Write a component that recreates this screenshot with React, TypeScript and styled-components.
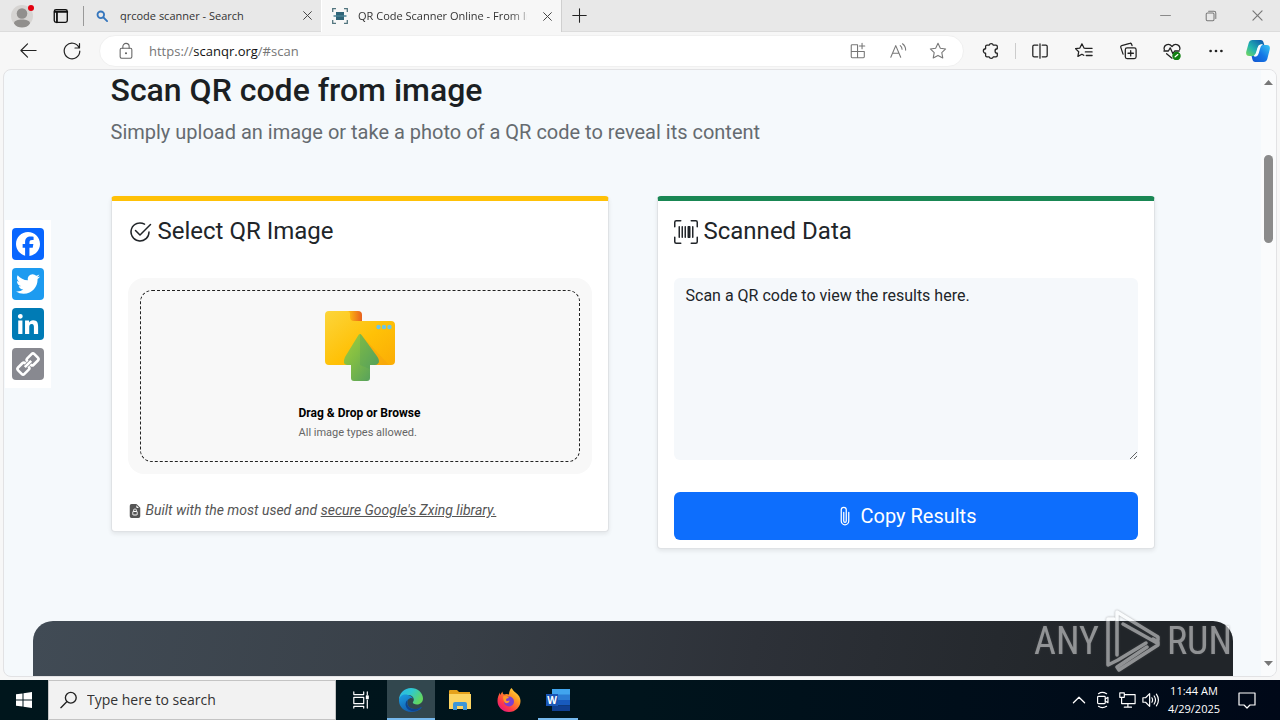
import React from 'react';
import styled, { createGlobalStyle, css } from 'styled-components';
import { BsCheck2Circle, BsUpcScan, BsPaperclip, BsFileEarmarkLockFill } from 'react-icons/bs';

const ui = "'Open Sans', 'Noto Sans', sans-serif";

const GlobalStyle = createGlobalStyle`
  *, *::before, *::after { box-sizing: border-box; }
  body { margin: 0; font-family: Roboto, sans-serif; color: #212529; }
  button { font: inherit; color: inherit; border: 0; background: none; padding: 0; margin: 0; }
  h1, h2, p { margin: 0; font-weight: 400; }
  svg { display: block; flex: none; }
`;

const Screen = styled.div`
  display: flex;
  flex-direction: column;
  height: 100vh;
  position: relative;
  overflow: hidden;
  background: #f7f7f7;
`;

/* ---------- browser chrome ---------- */

const TabStrip = styled.header`
  display: flex;
  align-items: stretch;
  height: 32px;
  flex: none;
  background: #e8e8e8;
  border-bottom: 1px solid #dcdcdc;
  font: 11px/16px ${ui};
  color: #333;
`;

const IconButton = styled.button<{ $w: number }>`
  width: ${(p) => p.$w}px;
  flex: none;
  display: flex;
  align-items: center;
  justify-content: center;
`;

const StripDivider = styled.span`
  width: 1px;
  height: 20px;
  margin: 6px 0 0 4px;
  background: #999;
`;

const Tab = styled.div<{ $active?: boolean }>`
  display: flex;
  align-items: center;
  width: ${(p) => (p.$active ? 241 : 237)}px;
  padding: 0 4px 0 ${(p) => (p.$active ? 10 : 12)}px;
  gap: ${(p) => (p.$active ? 10 : 12)}px;
  ${(p) =>
    p.$active &&
    css`
      background: #f7f7f7;
      height: 32px;
      border-right: 1px solid #cfcfcf;
      border-left: 1px solid #fff;
    `}
`;

const TabTitle = styled.span<{ $fade?: boolean }>`
  flex: 1;
  min-width: 0;
  overflow: hidden;
  white-space: nowrap;
  ${(p) => p.$fade && 'mask-image: linear-gradient(90deg, #000 150px, transparent 178px);'}
`;

const WindowControls = styled.div`
  display: flex;
  margin-left: auto;
`;

const Toolbar = styled.nav`
  display: flex;
  align-items: center;
  height: 37px;
  flex: none;
  padding: 0 2px 0 6px;
  background: #f7f7f7;
`;

const AddressBar = styled.div`
  flex: 1;
  min-width: 0;
  display: flex;
  align-items: center;
  height: 32px;
  margin: 0 5px;
  padding: 0 5px 0 8px;
  border-radius: 16px;
  background: #fff;
  border: 1px solid #f0f0f0;
`;

const Url = styled.a`
  flex: 1;
  margin-left: 6px;
  font: 13px/18px ${ui};
  color: #767676;
  text-decoration: none;
  b { font-weight: 400; color: #111; }
`;

const ToolDivider = styled.span`
  width: 1px;
  height: 16px;
  margin: 0 2px;
  background: #ccc;
`;

const Frame = styled.div`
  flex: 1;
  min-height: 0;
  display: flex;
  margin: 0 3px 3px;
  border: 1px solid #e2e2e4;
  border-radius: 8px;
  overflow: hidden;
  position: relative;
  background: #f5f9fc;
`;

const Scrollbar = styled.div`
  width: 15px;
  flex: none;
  display: flex;
  flex-direction: column;
  align-items: center;
  justify-content: space-between;
  padding: 9px 0;
  background: #fafbfc;
`;

const Thumb = styled.span`
  width: 9px;
  height: 88px;
  margin-bottom: 348px;
  border-radius: 5px;
  background: #8b8b8b;
`;

/* ---------- web page ---------- */

const Page = styled.main`
  flex: 1;
  min-width: 0;
  display: flex;
  flex-direction: column;
  padding: 1px 28px 0;
`;

const Container = styled.section`
  width: 100%;
  max-width: 1044px;
  margin: 0 auto 72px;
`;

const Heading = styled.h1`
  font-size: 32px;
  line-height: 38px;
  font-weight: 500;
  color: #1b1f23;
`;

const Lead = styled.p`
  margin: 8px 0 49px;
  font-size: 20px;
  line-height: 30px;
  color: #656b70;
`;

const Columns = styled.div`
  display: grid;
  grid-template-columns: 1fr 1fr;
  gap: 48px;
  align-items: start;
`;

const Card = styled.article<{ $accent: string }>`
  padding: 16px 16px 8px;
  border: 1px solid #dfe2e5;
  border-top: 5px solid ${(p) => p.$accent};
  border-radius: 4px;
  background: #fff;
  box-shadow: 0 2px 4px rgba(0, 0, 0, 0.08);
`;

const CardTitle = styled.h2`
  display: flex;
  align-items: center;
  gap: 6px;
  margin-bottom: 32px;
  font-size: 24px;
  line-height: 29px;
`;

const DropPane = styled.div`
  padding: 12px;
  border-radius: 16px;
  background: #f8f8f8;
`;

const DropZone = styled.label`
  display: flex;
  flex-direction: column;
  align-items: center;
  height: 172px;
  padding-top: 20px;
  border: 1px dashed #222;
  border-radius: 12px;
  color: #000;
  input { position: absolute; width: 1px; height: 1px; opacity: 0; }
`;

const DropText = styled.span`
  display: block;
  margin-top: 22px;
  font-size: 12px;
  line-height: 20px;
  strong { display: block; font-weight: 700; }
  small { display: block; font-size: 11px; color: #666; }
`;

const Note = styled.p`
  display: flex;
  align-items: center;
  gap: 4px;
  margin: 26px 0 2px;
  font-size: 14px;
  line-height: 21px;
  font-style: italic;
  color: #555;
  a { color: inherit; }
`;

const Result = styled.textarea`
  display: block;
  width: 100%;
  height: 182px;
  margin-bottom: 32px;
  padding: 6px 12px;
  border: 0;
  border-radius: 6px;
  resize: vertical;
  background: #f5f8fb;
  color: #212529;
  font: 16px/24px Roboto, sans-serif;
`;

const CopyButton = styled.button`
  display: flex;
  align-items: center;
  justify-content: center;
  gap: 6px;
  width: 100%;
  height: 48px;
  border-radius: 6px;
  background: #0d6efd;
  color: #fff;
  font-size: 20px;
  line-height: 30px;
`;

const DarkPanel = styled.section`
  flex: 1 0 56px;
  width: 100%;
  max-width: 1200px;
  margin: 0 auto;
  border-radius: 20px 20px 0 0;
  background: linear-gradient(100deg, #414b55 0%, #383f47 35%, #2d3138 60%, #212529 90%);
`;

const ShareBar = styled.aside`
  position: absolute;
  left: 1px;
  top: 150px;
  display: flex;
  flex-direction: column;
  gap: 8px;
  padding: 8px 7px;
  background: #fff;
`;

const ShareLink = styled.a<{ $bg: string }>`
  width: 32px;
  height: 32px;
  border-radius: 4px;
  background: ${(p) => p.$bg};
`;

const Watermark = styled.div`
  position: absolute;
  right: 48px;
  bottom: 48px;
  display: flex;
  align-items: center;
  gap: 7px;
  color: #fff;
  opacity: 0.5;
  font: 38px/62px 'Roboto Condensed', 'Liberation Sans Narrow', 'Liberation Sans', sans-serif;
  filter: drop-shadow(0 0 1px #555);
  pointer-events: none;
`;

/* ---------- taskbar ---------- */

const Taskbar = styled.footer`
  display: flex;
  align-items: stretch;
  height: 40px;
  flex: none;
  background: linear-gradient(90deg, #00161c, #00141c 50%, #000818);
  color: #fff;
  font-family: ${ui};
`;

const SearchBox = styled.label`
  display: flex;
  align-items: center;
  gap: 9px;
  width: 288px;
  padding-left: 11px;
  border: 1px solid #c4c4c4;
  background: #f2f2f2;
  color: #222;
  input {
    flex: 1;
    min-width: 0;
    border: 0;
    padding: 0;
    background: transparent;
    font: 14px/20px ${ui};
  }
  input::placeholder { color: #333; opacity: 1; }
`;

const AppButton = styled(IconButton)<{ $active?: boolean; $open?: boolean }>`
  position: relative;
  margin-right: 1px;
  background: ${(p) => (p.$active ? '#32474e' : 'none')};
  ${(p) =>
    (p.$active || p.$open) &&
    css`
      &::after {
        content: '';
        position: absolute;
        bottom: 0;
        left: ${p.$active ? 0 : 4}px;
        right: ${p.$active ? 0 : 4}px;
        height: 2px;
        background: #76b9ed;
      }
    `}
`;

const AppList = styled.div`
  display: flex;
`;

const Tray = styled.div`
  display: flex;
  margin-left: auto;
  padding-right: 11px;
`;

const Clock = styled.time`
  width: 62px;
  padding-top: 2px;
  text-align: center;
  font-size: 11px;
  line-height: 18px;
  white-space: nowrap;
`;

/* ---------- icons ---------- */

type LineProps = { size?: number; color?: string; w?: number; children: React.ReactNode };
const Line = ({ size = 20, color = '#222', w = 1.2, children }: LineProps) => (
  <svg width={size} height={size} viewBox="0 0 20 20" fill="none" stroke={color} strokeWidth={w} strokeLinecap="round" strokeLinejoin="round" aria-hidden="true">
    {children}
  </svg>
);

const CloseIcon = ({ color = '#444', size = 11 }) => (
  <Line size={size} color={color} w={1.8}><path d="M3 3l14 14M17 3L3 17" /></Line>
);

const Avatar = () => (
  <svg width="26" height="26" viewBox="0 0 26 26" aria-hidden="true">
    <circle cx="14" cy="13" r="11" fill="#d6d4d2" />
    <circle cx="14" cy="10.500" r="5.300" fill="#918f8d" />
    <path d="M6 20.500c0-3 4-4 8-4s8 1 8 4c-2 3-5 4-8 4s-6-1-8-4z" fill="#918f8d" />
    <circle cx="23" cy="5" r="3" fill="#e3000f" />
  </svg>
);

const ScanFavicon = () => (
  <svg width="16" height="16" viewBox="0 0 16 16" fill="none" aria-hidden="true">
    <path d="M.7 4V.7H4M12 .7h3.300V4M15.300 12v3.300H12M4 15.300H.7V12" stroke="#53767f" strokeWidth="1.300" />
    <path d="M4 4h8v8H4z" fill="#2e6478" />
    <path d="M1.500 8h13" stroke="#4a8294" strokeWidth="1.500" />
  </svg>
);

const Copilot = () => (
  <svg width="24" height="24" viewBox="0 0 24 24" aria-hidden="true">
    <defs>
      <linearGradient id="cpA" x1="0" y1="1" x2="1" y2="0">
        <stop offset="0" stopColor="#7ad957" /><stop offset=".4" stopColor="#22b5b0" /><stop offset="1" stopColor="#0a4fae" />
      </linearGradient>
      <linearGradient id="cpB" x1="1" y1="0" x2="0" y2="1">
        <stop offset="0" stopColor="#38c8f2" /><stop offset=".5" stopColor="#1477e6" /><stop offset="1" stopColor="#1254cf" />
      </linearGradient>
    </defs>
    <path d="M6.500 1h8.200c1.800 0 2.500 1.300 3 3l.6 2h-3.200c-2 0-2.600 1-3.200 3l-1.500 5c-.6 2-1.500 3-3.300 3H3.200C.6 17-.3 15 .3 12.500L2.700 4C3.300 2 4.500 1 6.500 1z" fill="url(#cpA)" />
    <path d="M17.500 23H9.300c-1.800 0-2.500-1.300-3-3l-.7-3h2c2 0 3-1 3.600-3l1.500-5c.6-2 1.500-3 3.500-3h4.600c2.600 0 3.500 2 2.900 4.500L21.300 20c-.6 2-1.800 3-3.800 3z" fill="url(#cpB)" />
    <path d="M12.200 9c.5-1.800 1.300-2.800 2.800-3-1 1-1.300 2.200-1.700 3.500L12 14c-.6 2-1.700 3.100-3.600 3 1.400-.6 1.900-1.600 2.300-3z" fill="#f7fbff" stroke="#f7fbff" strokeWidth="1.500" />
  </svg>
);

const UploadFolder = () => (
  <svg width="70" height="70" viewBox="0 0 70 70" aria-hidden="true">
    <defs>
      <linearGradient id="fold" x1="0" y1="0" x2="1" y2="1">
        <stop offset="0" stopColor="#fcd53b" /><stop offset=".55" stopColor="#ffc107" /><stop offset="1" stopColor="#fbac05" />
      </linearGradient>
      <linearGradient id="tabg" x1="0" y1="0" x2="1" y2="0">
        <stop offset=".3" stopColor="#fbb112" /><stop offset="1" stopColor="#e8601e" />
      </linearGradient>
      <linearGradient id="arr" x1="0" y1="0" x2="1" y2="1">
        <stop offset="0" stopColor="#a2cf3d" /><stop offset=".4" stopColor="#82bd44" /><stop offset="1" stopColor="#4b9a63" />
      </linearGradient>
    </defs>
    <path d="M20 0h13q4 0 4 4v8H20z" fill="url(#tabg)" />
    <path d="M4 0h18q3 0 3 3v3q0 4 4 4h37q4 0 4 4v36q0 4-4 4H4q-4 0-4-4V4q0-4 4-4z" fill="url(#fold)" />
    <path d="M37 25l27 29H45V40z" fill="#f3a010" opacity=".45" />
    <path d="M33.500 24q1.500-2 3 0l16 22q3 5 0 7-1 1-3 1h-4.500v13q0 3-3 3H29q-3 0-3-3V54h-4q-5-1-2-8z" fill="url(#arr)" />
    <path d="M35 23q1 0 1.500 1l16 22q3 5 0 7-1 1-3 1h-4.500v4L35 54z" fill="#4c9a60" opacity=".28" />
    <g fill="#6cc6e6"><circle cx="53.500" cy="16" r="2.200" /><circle cx="59" cy="16" r="2.200" /><circle cx="64.500" cy="16" r="2.200" /></g>
  </svg>
);

const EdgeLogo = () => (
  <svg width="24" height="24" viewBox="0 0 24 24" aria-hidden="true">
    <defs>
      <linearGradient id="edA" x1="0" y1="0" x2="1" y2=".5"><stop offset="0" stopColor="#2bb5ea" /><stop offset=".5" stopColor="#2fc8cf" /><stop offset="1" stopColor="#62d660" /></linearGradient>
      <linearGradient id="edB" x1="0" y1="0" x2=".6" y2="1"><stop offset="0" stopColor="#1b9ee2" /><stop offset="1" stopColor="#1257a8" /></linearGradient>
    </defs>
    <path d="M0 12C0 5 5.500 0 12 0s12 4.800 12 10.500c0 3.500-2.700 6-6 6-2.500 0-4.200-.9-4.200-1.900 0-.7 1-1.200 1-3C14.800 9 12.300 7 9 7 4.500 7 1 9 0 12z" fill="url(#edA)" />
    <path d="M0 12c.6-4.200 4.500-6.300 9-5 2.500.6 4.500 2 5 3.500-1.200-1-3.500-.7-4.800 1-2.600 4 .6 9.500 6.300 9.500 2.700 0 5-1 6.300-1.800.6-.3.9.2.6.7C20.200 22.500 16.500 24 12 24 5 24-.3 18.500 0 12z" fill="url(#edB)" />
    <path d="M9 11.500c-2.600 4 .6 9.500 6.300 9.500 2.700 0 5-1 6.500-1.800C17 25.500 7.500 23.500 6.600 17c-.2-2.300.7-4.300 2.400-5.500z" fill="#0d4390" />
  </svg>
);

const ExplorerLogo = () => (
  <svg width="22" height="20" viewBox="0 0 22 20" aria-hidden="true">
    <path d="M0 1q0-1 1-1h7l2 2h11v4H0z" fill="#e5a11b" />
    <path d="M0 4h22v15H0z" fill="#fcd462" />
    <path d="M4 20v-6q0-2 2-2h10q2 0 2 2v6h-4v-4H8v4z" fill="#3c96d6" />
  </svg>
);

const FirefoxLogo = () => (
  <svg width="24" height="24" viewBox="0 0 24 24" aria-hidden="true">
    <defs>
      <linearGradient id="ff" x1="1" y1="0" x2=".2" y2="1"><stop offset="0" stopColor="#fff04a" /><stop offset=".4" stopColor="#ff9722" /><stop offset=".75" stopColor="#ff3a47" /><stop offset="1" stopColor="#e21485" /></linearGradient>
    </defs>
    <path d="M14.500 0c1.500 2 2 3 4 4.500C22 7 23.500 10 23.500 13c0 6-5 11-11.500 11S.5 19 .5 13c0-3.500 1-6 2.500-8.500V7l2.500-3.500c0 1.500.5 2.500 1.500 3C9 5.500 11 6 12 6.500c0-2.500.8-5 2.500-6.500z" fill="url(#ff)" />
    <circle cx="12" cy="13.500" r="5" fill="#7a3fd0" />
    <path d="M6 8.500c2-1 4.500-.5 6 1.500-2 0-3 .8-3 2 0 1.500 2.500 1 3.500.500 0 2-2 3-4 2.500C7 14 6 11.500 6 8.500z" fill="#ff9a26" />
  </svg>
);

const WordLogo = () => (
  <svg width="24" height="22" viewBox="0 0 24 22" aria-hidden="true">
    <path d="M6 0h18v6H6z" fill="#41a5ee" /><path d="M6 5.500h18V11H6z" fill="#2b7cd3" />
    <path d="M6 11h18v5.500H6z" fill="#185abd" /><path d="M6 16.500h18V22H6z" fill="#103f91" />
    <path d="M0 5h12v12H0z" fill="#1a56b5" />
    <text x="6" y="14.500" fill="#fff" fontSize="10" fontWeight="700" textAnchor="middle" fontFamily="Open Sans, sans-serif">W</text>
  </svg>
);

const PlayMark = () => (
  <svg width="54" height="62" viewBox="0 0 54 62" fill="none" stroke="#fff" strokeWidth="3.500" strokeLinejoin="round" strokeLinecap="round" aria-hidden="true">
    <path d="M11 45V2l41 25v3" />
    <path d="M8 9H2v46l10-5 28-17M17 14l34 19" />
    <path d="M11 57l2 3 39-25v-3l-5-3M11 57l30-20" />
  </svg>
);

export default function App() {
  return (
    <>
      <GlobalStyle />
      <Screen>
        <TabStrip>
          <IconButton $w={42} aria-label="Profile"><Avatar /></IconButton>
          <IconButton $w={37} aria-label="Tab actions">
            <Line size={18} color="#111" w={1.5}><rect x="2.500" y="3" width="14.500" height="14" rx="2" /><path d="M3 5.500h14M5.500 6v11" strokeWidth="2" /></Line>
          </IconButton>
          <StripDivider />
          <Tab>
            <Line size={12} color="#3576bd" w={3}><circle cx="8" cy="8" r="5.500" /><path d="M12.500 12.500l6 6" /></Line>
            <TabTitle>qrcode scanner - Search</TabTitle>
            <IconButton $w={20} aria-label="Close tab"><CloseIcon /></IconButton>
          </Tab>
          <Tab $active>
            <ScanFavicon />
            <TabTitle $fade>QR Code Scanner Online - From Image</TabTitle>
            <IconButton $w={20} aria-label="Close tab"><CloseIcon /></IconButton>
          </Tab>
          <IconButton $w={34} aria-label="New tab"><Line size={15} w={1.4}><path d="M10 1v18M1 10h18" /></Line></IconButton>
          <WindowControls>
            <IconButton $w={46} aria-label="Minimize"><Line size={11} color="#888" w={1.8}><path d="M1 10h18" /></Line></IconButton>
            <IconButton $w={46} aria-label="Restore"><Line size={12} color="#777" w={1.7}><rect x="2" y="5" width="13" height="13" rx="2" /><path d="M6 2h9q3 0 3 3v9" /></Line></IconButton>
            <IconButton $w={46} aria-label="Close"><CloseIcon color="#777" size={13} /></IconButton>
          </WindowControls>
        </TabStrip>

        <Toolbar>
          <IconButton $w={44} aria-label="Back"><Line size={19}><path d="M18 10H2M9 3l-7 7 7 7" /></Line></IconButton>
          <IconButton $w={44} aria-label="Refresh"><Line size={20}><path d="M17 6.500A7.800 7.800 0 1 0 17.800 10M17.500 2.500v4.500H13" /></Line></IconButton>
          <AddressBar>
            <IconButton $w={35} aria-label="Site information">
              <Line size={18} color="#666"><rect x="3.500" y="7" width="13" height="11" rx="1.500" /><path d="M6.500 7V5a3.500 3.500 0 0 1 7 0v2" /><circle cx="10" cy="12.500" r=".6" fill="#666" /></Line>
            </IconButton>
            <Url href="#scan">https://<b>scanqr.org</b>/#scan</Url>
            <IconButton $w={40} aria-label="App available">
              <Line size={18} color="#777"><path d="M9.500 3H3.500q-1 0-1 1v12.500q0 1 1 1H16q1 0 1-1v-6H2.500M9.500 3v14.500M14.500 1.500v6M11.500 4.500h6" /></Line>
            </IconButton>
            <IconButton $w={40} aria-label="Read aloud">
              <Line size={18} color="#777"><path d="M2 17L7.500 4 13 17M4 12.500h7M12.500 4q2 1.500 2 4M15 2q3.500 2.500 3.500 7" /></Line>
            </IconButton>
            <IconButton $w={40} aria-label="Add to favorites">
              <Line size={18} color="#777"><path d="M10 1.500l2.600 5.400 5.900.8-4.300 4.100 1.100 5.900L10 14.900l-5.300 2.800 1.100-5.900L1.500 7.700l5.900-.8z" /></Line>
            </IconButton>
          </AddressBar>
          <IconButton $w={44} aria-label="Extensions">
            <Line size={18} w={1.4}><path d="M5.500 3.500H8a2.300 2.300 0 0 1 4.500 0h3q1.500 0 1.500 1.500v2.500a1.500 1.500 0 0 0 0 5V15q0 1.500-1.500 1.500h-3a2.300 2.300 0 0 1-4.500 0H5.500Q4 16.500 4 15v-2.500a2.400 2.400 0 0 1 0-5V5q0-1.500 1.500-1.500z" /></Line>
          </IconButton>
          <ToolDivider />
          <IconButton $w={44} aria-label="Split screen">
            <Line size={18} w={1.4}><path d="M7.500 3.500h-4Q2 3.500 2 5v10q0 1.500 1.500 1.500h4M10 2v16M12.500 3.500h4q1.500 0 1.500 1.500v10q0 1.500-1.500 1.500h-4" /></Line>
          </IconButton>
          <IconButton $w={44} aria-label="Favorites">
            <Line size={18} w={1.400}><path d="M12 7l-2-.3L7.700 2 5.400 6.700l-4.900.7 3.600 3.500-.9 5.100 4.500-2.400 2 1.200M12.500 7h6.500M11.500 11h7.500M12.500 15h6.500" /></Line>
          </IconButton>
          <IconButton $w={44} aria-label="Collections">
            <Line size={18} w={1.400}><rect x="7" y="6.500" width="12" height="12" rx="2" /><path d="M13 9.500v6M10 12.500h6M4.500 13.500L2 6q-.500-1.500 1-2l9-2.500q1.500-.5 2 1l.5 1.500" /></Line>
          </IconButton>
          <IconButton $w={44} aria-label="Browser essentials">
            <Line size={18} w={1.400}><path d="M1.500 8.500C0 4 6 0 10 5c4-5 10-1 8.500 3.500M1 10h5l2-3.500 3 6.500 2-3h5M4 13l6 5" /><circle cx="15" cy="15.500" r="4" fill="#128012" stroke="#128012" /><path d="M13.500 16.500l3-2.500" stroke="#fff" /></Line>
          </IconButton>
          <IconButton $w={44} aria-label="Settings and more">
            <Line size={18} w={0}><g fill="#222"><circle cx="4" cy="10" r="1.500" /><circle cx="10" cy="10" r="1.500" /><circle cx="16" cy="10" r="1.500" /></g></Line>
          </IconButton>
          <IconButton $w={40} aria-label="Copilot"><Copilot /></IconButton>
        </Toolbar>

        <Frame>
          <Page>
            <Container>
              <Heading>Scan QR code from image</Heading>
              <Lead>Simply upload an image or take a photo of a QR code to reveal its content</Lead>
              <Columns>
                <Card $accent="#ffc107">
                  <CardTitle><BsCheck2Circle size={24} />Select QR Image</CardTitle>
                  <DropPane>
                    <DropZone>
                      <input type="file" accept="image/*" />
                      <UploadFolder />
                      <DropText><strong>Drag &amp; Drop or Browse</strong><small>All image types allowed.</small></DropText>
                    </DropZone>
                  </DropPane>
                  <Note><BsFileEarmarkLockFill size={14} /><span>Built with the most used and <a href="#zxing">secure Google's Zxing library.</a></span></Note>
                </Card>
                <Card $accent="#198754">
                  <CardTitle><BsUpcScan size={24} />Scanned Data</CardTitle>
                  <Result aria-label="Scanned data" readOnly defaultValue="Scan a QR code to view the results here." />
                  <CopyButton><BsPaperclip size={20} />Copy Results</CopyButton>
                </Card>
              </Columns>
            </Container>
            <DarkPanel />
          </Page>
          <Scrollbar>
            <svg width="9" height="6" viewBox="0 0 9 6" aria-hidden="true"><path d="M0 6l4.500-5L9 6z" fill="#777" /></svg>
            <Thumb />
            <svg width="9" height="6" viewBox="0 0 9 6" aria-hidden="true"><path d="M0 0l4.500 5L9 0z" fill="#777" /></svg>
          </Scrollbar>
          <ShareBar>
            <ShareLink $bg="#0866ff" href="#facebook" aria-label="Facebook">
              <svg width="32" height="32" viewBox="0 0 32 32" fill="#fff"><path d="M28 16c0-6.627-5.373-12-12-12S4 9.373 4 16c0 5.628 3.875 10.350 9.101 11.647v-7.980h-2.474V16H13.100v-1.580c0-4.085 1.849-5.978 5.859-5.978.76 0 2.072.15 2.608.298v3.325c-.283-.03-.775-.045-1.386-.045-1.967 0-2.728.745-2.728 2.683V16h3.920l-.673 3.667h-3.247v8.245C23.395 27.195 28 22.135 28 16" /></svg>
            </ShareLink>
            <ShareLink $bg="#1d9bf0" href="#twitter" aria-label="Twitter">
              <svg width="32" height="32" viewBox="0 0 32 32" fill="#fff"><path d="M28 8.557a10 10 0 0 1-2.828.775 4.930 4.930 0 0 0 2.166-2.725 9.700 9.700 0 0 1-3.130 1.194 4.920 4.920 0 0 0-3.593-1.550 4.924 4.924 0 0 0-4.794 6.049c-4.090-.21-7.720-2.170-10.150-5.150a4.940 4.940 0 0 0-.665 2.477c0 1.710.87 3.214 2.190 4.100a5 5 0 0 1-2.230-.616v.06c0 2.390 1.700 4.380 3.952 4.830-.414.115-.85.174-1.297.174q-.476-.001-.928-.086a4.935 4.935 0 0 0 4.600 3.420 9.900 9.900 0 0 1-6.114 2.107q-.597 0-1.175-.068a13.950 13.950 0 0 0 7.550 2.213c9.056 0 14.010-7.507 14.010-14.013q0-.32-.015-.637c.96-.695 1.795-1.560 2.455-2.550z" /></svg>
            </ShareLink>
            <ShareLink $bg="#007bb5" href="#linkedin" aria-label="LinkedIn">
              <svg width="32" height="32" viewBox="0 0 32 32" fill="#fff"><path d="M6.227 12.610h4.190v13.480h-4.190zm2.095-6.700a2.430 2.430 0 0 1 0 4.860c-1.344 0-2.428-1.090-2.428-2.430s1.084-2.430 2.428-2.430m4.720 6.700h4.020v1.840h.058c.56-1.058 1.927-2.176 3.965-2.176 4.238 0 5.020 2.792 5.020 6.420v7.395h-4.183v-6.560c0-1.564-.03-3.574-2.178-3.574-2.180 0-2.514 1.700-2.514 3.460v6.668h-4.187z" /></svg>
            </ShareLink>
            <ShareLink $bg="#888990" href="#copy" aria-label="Copy link">
              <svg width="32" height="32" viewBox="0 0 32 32" fill="none" stroke="#fff" strokeWidth="2.600"><g transform="rotate(-45 16 16)"><path d="M14.500 18v.5q0 2-2 2H6.500q-2 0-2-2v-5q0-2 2-2h6q2 0 2 2v.5" /><path d="M17.500 14v-.5q0-2 2-2h6q2 0 2 2v5q0 2-2 2h-6q-2 0-2-2V18" /><path d="M11.500 16h9" /></g></svg>
            </ShareLink>
          </ShareBar>
        </Frame>

        <Taskbar>
          <IconButton $w={48} aria-label="Start">
            <svg width="16" height="16" viewBox="0 0 16 16" fill="#fff"><path d="M0 2.300l6.500-.9v6.100H0zM7.500 1.200L16 0v7.500H7.500zM0 8.500h6.500v6.100L0 13.700zM7.500 8.500H16V16l-8.500-1.200z" /></svg>
          </IconButton>
          <SearchBox>
            <Line size={18} color="#222" w={1.500}><circle cx="12" cy="7.500" r="6" /><path d="M7.500 12L1 18.500" /></Line>
            <input type="text" aria-label="Search" placeholder="Type here to search" />
          </SearchBox>
          <AppList>
            <AppButton $w={50} aria-label="Task view"><Line size={18} color="#fff" w={1.300}><path d="M2 1v3h11V1M2 7h11v7H2zM2 19v-2h11v2M17 1v3M17 10v9" /><path d="M16 5.500h2v3h-2z" fill="#fff" /></Line></AppButton>
            <AppButton $w={48} $active aria-label="Microsoft Edge"><EdgeLogo /></AppButton>
            <AppButton $w={48} aria-label="File Explorer"><ExplorerLogo /></AppButton>
            <AppButton $w={48} aria-label="Firefox"><FirefoxLogo /></AppButton>
            <AppButton $w={48} $open aria-label="Word"><WordLogo /></AppButton>
          </AppList>
          <Tray>
            <IconButton $w={24} aria-label="Show hidden icons"><Line size={14} color="#fff" w={1.800}><path d="M2 14l8-8 8 8" /></Line></IconButton>
            <IconButton $w={24} aria-label="Camera"><Line size={18} color="#fff" w={1.300}><rect x="4" y="6" width="8.500" height="8" rx="1" /><path d="M12.500 9l3-2v6l-3-2M5 3q4-3 9 0M5 17q4 3 9 0" /></Line></IconButton>
            <IconButton $w={24} aria-label="Network"><Line size={18} color="#fff" w={1.300}><path d="M7 4h12v10H4V9M2 2h5v5H2zM4 7v3M11 14v4M7 18h8" /></Line></IconButton>
            <IconButton $w={24} aria-label="Volume"><Line size={18} color="#fff" w={1.300}><path d="M1 7.500h3L8.500 3v14L4 12.500H1zM11 7.500q1.500 2.500 0 5M13.500 5.500q3 4.500 0 9M16 3.500q4.500 6.500 0 13" /></Line></IconButton>
            <Clock>11:44 AM<br />4/29/2025</Clock>
            <IconButton $w={44} aria-label="Notifications"><Line size={20} color="#fff" w={1.200}><path d="M2 3h16v12h-5l-3 3-3-3H2z" /></Line></IconButton>
          </Tray>
        </Taskbar>
        <Watermark aria-hidden="true">ANY<PlayMark />RUN</Watermark>
      </Screen>
    </>
  );
}
